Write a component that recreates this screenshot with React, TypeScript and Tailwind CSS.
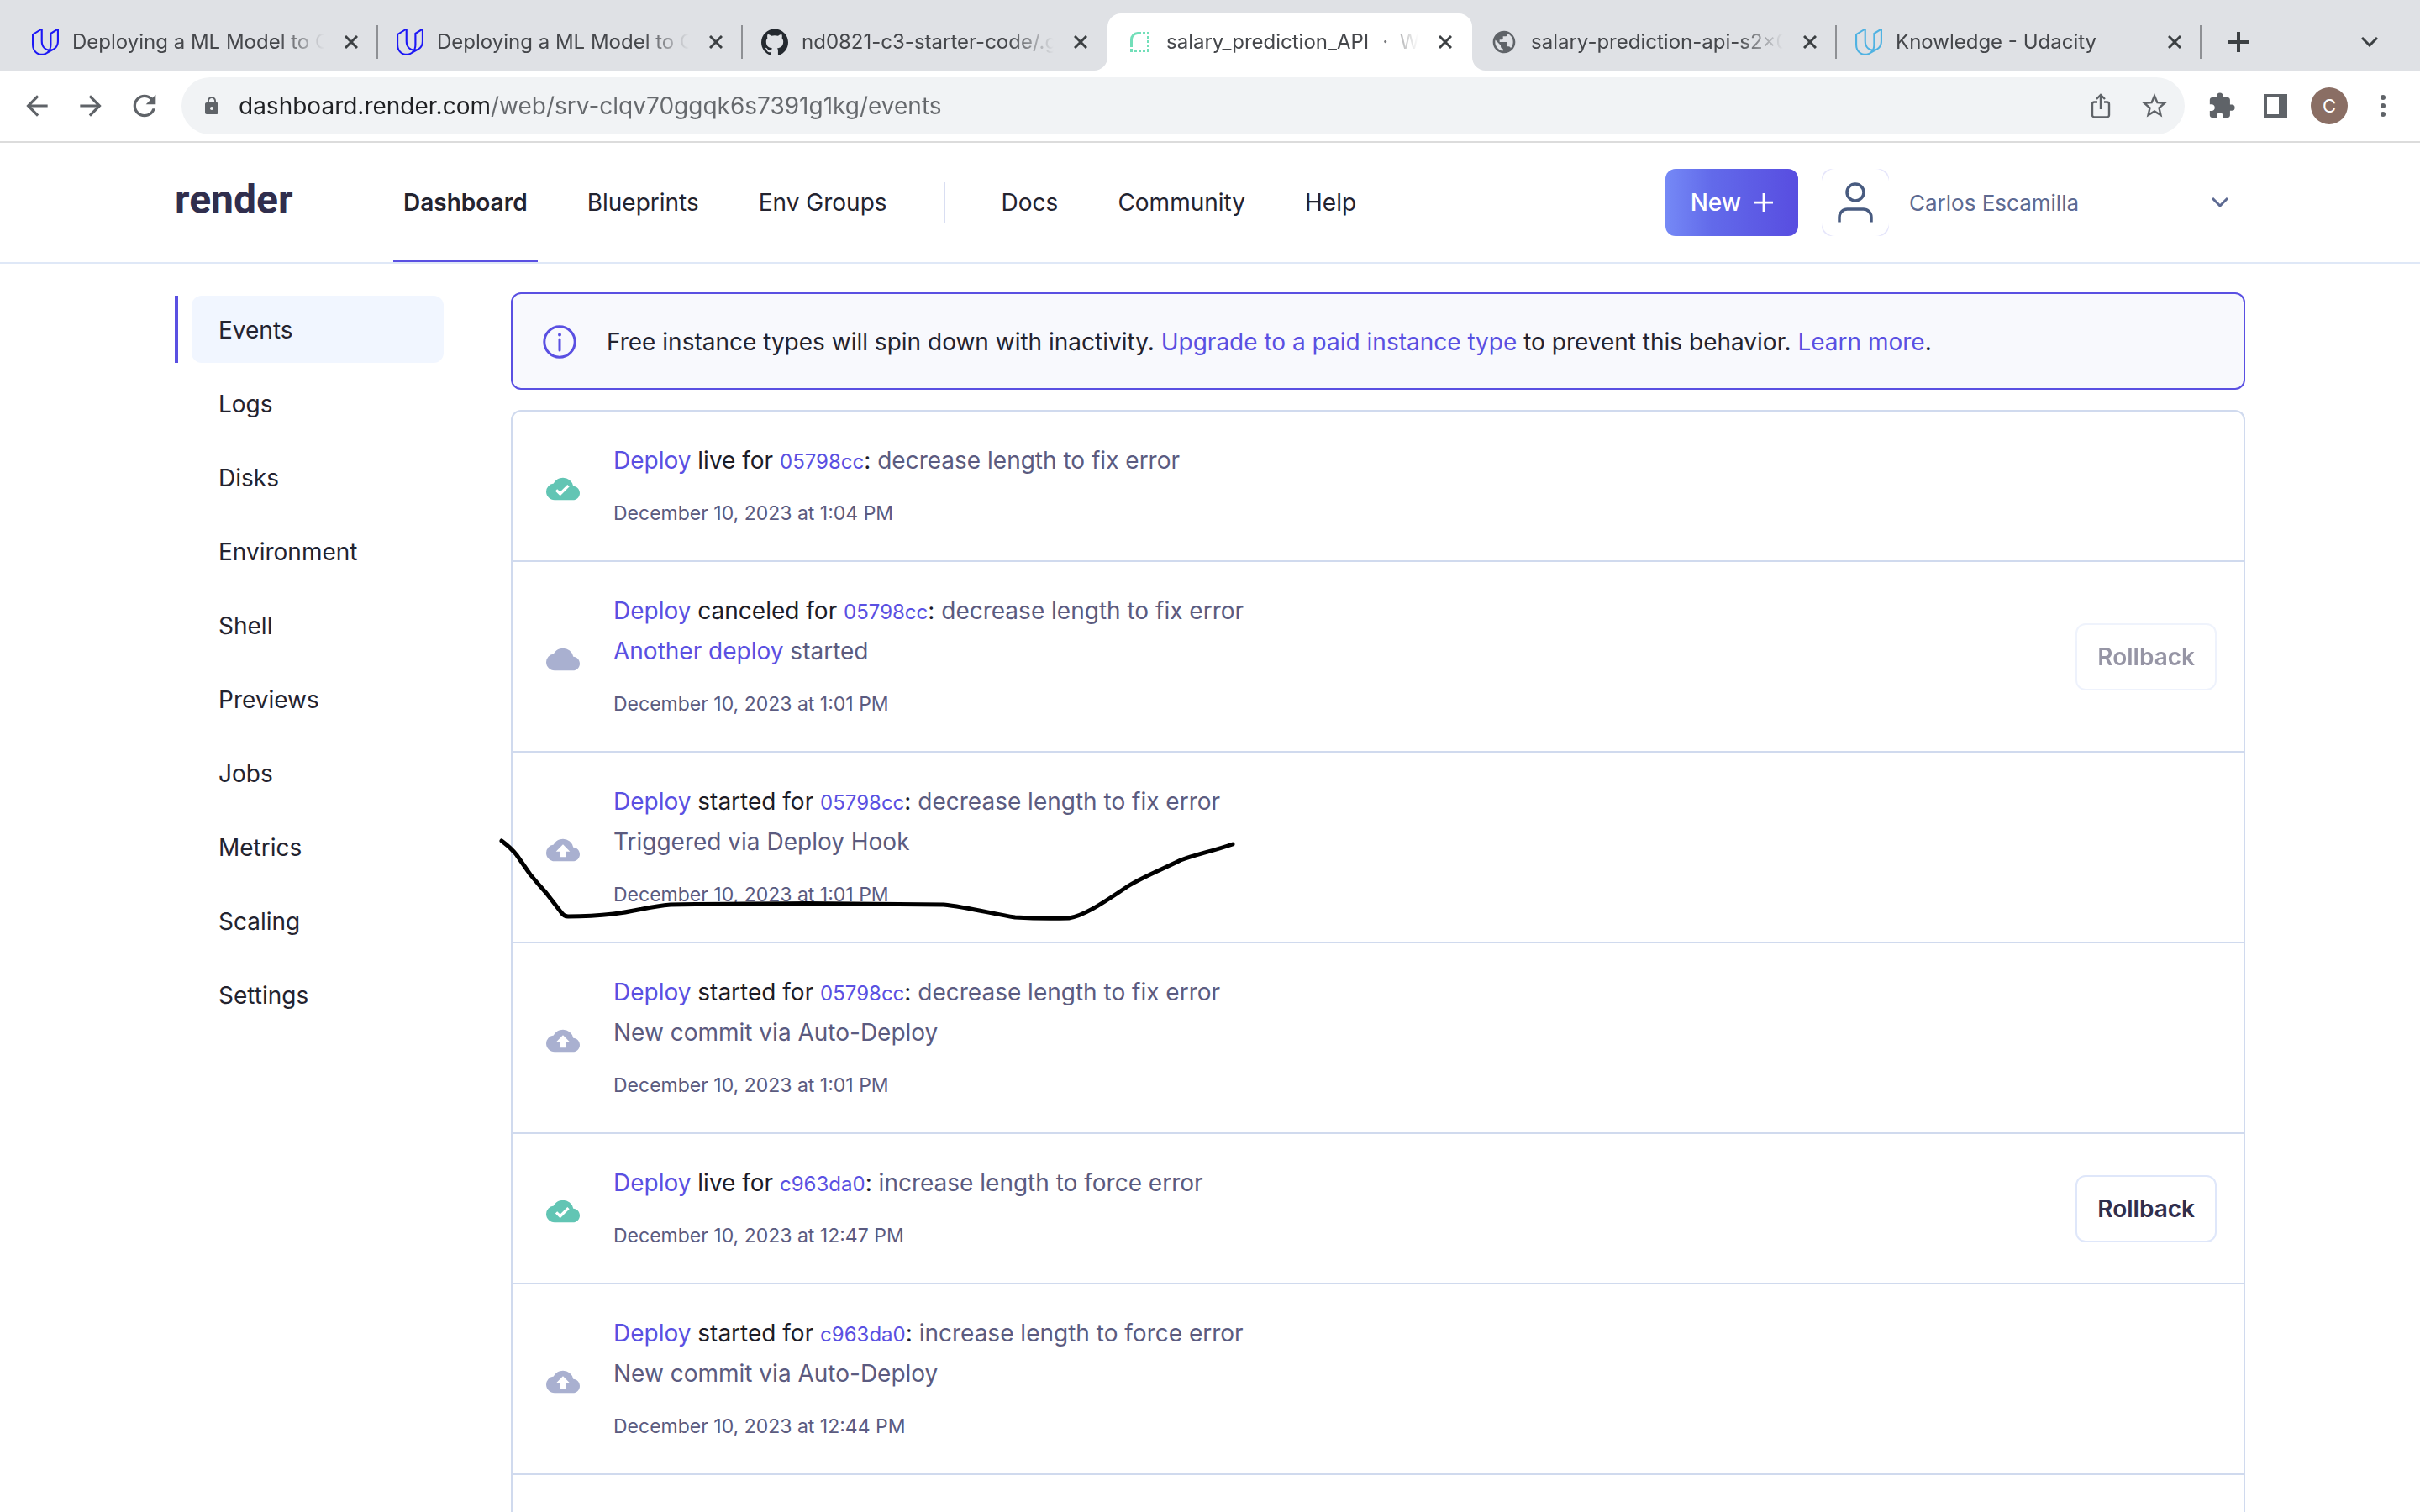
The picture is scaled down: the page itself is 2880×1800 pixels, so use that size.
import React from "react";
import {
  MdArrowBack,
  MdArrowForward,
  MdBackup,
  MdCloud,
  MdCloudDone,
  MdExtension,
  MdLock,
  MdPublic,
  MdRefresh,
  MdStarBorder,
} from "react-icons/md";
import { SiGithub, SiUdacity } from "react-icons/si";

/* ---------- small drawings ---------- */

function CloseIcon() {
  return (
    <svg viewBox="0 0 16 16" className="size-4" fill="none" stroke="#3c4043" strokeWidth="3">
      <path d="M1 1l14 14M15 1L1 15" />
    </svg>
  );
}

function Chevron({ className }: { className: string }) {
  return (
    <svg viewBox="0 0 20 12" className={className} fill="none" stroke="currentColor" strokeWidth="3">
      <path d="M1 1l9 9 9-9" />
    </svg>
  );
}

function Plus({ className }: { className: string }) {
  return (
    <svg viewBox="0 0 24 24" className={className} fill="none" stroke="currentColor">
      <path d="M12 0v24M0 12h24" />
    </svg>
  );
}

function RenderFavicon() {
  return (
    <svg viewBox="0 0 32 32" className="size-8 shrink-0" fill="#72dfb9">
      <path d="M5 22V13a9 9 0 0 1 9-9h4v3h-4a6 6 0 0 0-6 6v9z" />
      <path d="M20 4h3v3h-3zM25 4h3v3h-3zM25 9h3v3h-3zM25 14h3v3h-3zM25 19h3v3h-3zM25 24h3v4h-3zM20 25h3v3h-3zM15 25h3v3h-3zM10 25h3v3h-3zM5 24h3v4H5z" />
    </svg>
  );
}

function ShareIcon() {
  return (
    <svg viewBox="0 0 24 30" className="h-[30px] w-6" fill="none" stroke="#5f6368" strokeWidth="2.4">
      <path d="M8 10.500H4.500a2.500 2.500 0 0 0-2.500 2.500v13a2.500 2.500 0 0 0 2.500 2.500h15a2.500 2.500 0 0 0 2.500-2.500V13a2.500 2.500 0 0 0-2.500-2.500H16" />
      <path d="M12 19V2.500M7 7l5-5 5 5" />
    </svg>
  );
}

function SidePanelIcon() {
  return (
    <svg viewBox="0 0 28 28" className="size-7" fill="#5f6368" fillRule="evenodd">
      <path d="M0 0h28v28H0zM4 4v20h14V4z" />
    </svg>
  );
}

function PersonIcon() {
  return (
    <svg viewBox="0 0 44 48" className="h-12 w-11" fill="none" stroke="#485b80" strokeWidth="3.500">
      <circle cx="22" cy="12" r="10" />
      <path d="M3 47.500V41.500a9.500 9.500 0 0 1 9.500-9.500h19a9.500 9.500 0 0 1 9.500 9.500v6" />
    </svg>
  );
}

function InfoIcon() {
  return (
    <svg viewBox="0 0 40 40" className="size-10 shrink-0" fill="none" stroke="#5a50e2" strokeWidth="3">
      <circle cx="20" cy="20" r="18.200" />
      <path d="M20 17v13" strokeLinecap="round" />
      <circle cx="20" cy="11.500" r="2" fill="#5a50e2" stroke="none" />
    </svg>
  );
}

function PenStroke() {
  return (
    <svg
      viewBox="590 990 890 110"
      className="pointer-events-none absolute top-[94px] -left-5 h-[110px] w-[890px]"
      fill="none"
      stroke="#000"
      strokeWidth="5"
      strokeLinecap="round"
      strokeLinejoin="round"
    >
      <path d="M597 1001Q608 1009 615 1018Q622 1028 631 1041Q640 1052 650 1063L667 1085Q671 1091 676 1091Q704 1091 730 1088C757 1085 772 1079 798 1077Q850 1076 960 1075.500L1123 1077C1152 1080 1182 1088 1208 1092Q1240 1094 1272 1093C1293 1090 1322 1068 1344 1054C1362 1043 1385 1034 1405 1024C1424 1017 1444 1013 1467 1005" />
    </svg>
  );
}

/* ---------- browser chrome ---------- */

type Tab = { title: string; more?: string; icon: React.ReactNode; active?: boolean; divider?: boolean };

const tabs: Tab[] = [
  { title: "Deploying a ML Model to C", icon: <SiUdacity className="size-8 shrink-0 text-[#1d18f5]" />, divider: true },
  { title: "Deploying a ML Model to C", icon: <SiUdacity className="size-8 shrink-0 text-[#1d18f5]" />, divider: true },
  { title: "nd0821-c3-starter-code/.g", icon: <SiGithub className="size-8 shrink-0 text-[#24292f]" /> },
  { title: "salary_prediction_API", more: "· \u00a0W", icon: <RenderFavicon />, active: true },
  { title: "salary-prediction-api-s2x0", icon: <MdPublic className="size-8 shrink-0 text-[#5f6368]" />, divider: true },
  { title: "Knowledge - Udacity", icon: <SiUdacity className="size-8 shrink-0 text-[#4fb2e2]" />, divider: true },
];

function TabFlare({ side }: { side: "left" | "right" }) {
  return (
    <svg
      viewBox="0 0 16 16"
      className={side === "left" ? "absolute bottom-0 -left-4 size-4" : "absolute -right-4 bottom-0 size-4 -scale-x-100"}
      fill="#fff"
    >
      <path d="M16 0v16H0A16 16 0 0 0 16 0z" />
    </svg>
  );
}

function BrowserTab({ tab }: { tab: Tab }) {
  return (
    <div
      className={
        "relative flex min-w-0 max-w-[434px] flex-1 items-center pr-6 pl-[22px] " +
        (tab.active ? "rounded-t-2xl bg-white" : "")
      }
    >
      {tab.active && <TabFlare side="left" />}
      {tab.active && <TabFlare side="right" />}
      {tab.icon}
      <span className="mr-6 ml-4 flex min-w-0 flex-1 gap-4 overflow-hidden text-2xl whitespace-nowrap text-[#45474b] [mask-image:linear-gradient(90deg,#000_82%,transparent)]">
        <span>{tab.title}</span>
        {tab.more && <span>{tab.more}</span>}
      </span>
      <button type="button" aria-label="Close tab">
        <CloseIcon />
      </button>
      {tab.divider && <span className="absolute top-1/2 right-0 h-10 w-0.5 -translate-y-1/2 bg-[#8e9094]" />}
    </div>
  );
}

function IconSlot({ label, children }: { label: string; children: React.ReactNode }) {
  return (
    <button type="button" aria-label={label} className="flex h-16 w-16 shrink-0 items-center justify-center text-[#5f6368]">
      {children}
    </button>
  );
}

function BrowserChrome() {
  return (
    <div className="shrink-0">
      <div className="flex h-[84px] bg-[#dfe1e5] pt-4 pr-[50px] pl-4 text-[#3c4043]">
        {tabs.map((tab, i) => (
          <BrowserTab key={i} tab={tab} />
        ))}
        <button type="button" aria-label="New tab" className="ml-8">
          <Plus className="size-6 stroke-4" />
        </button>
        <button type="button" aria-label="Search tabs" className="ml-auto">
          <Chevron className="h-3 w-5" />
        </button>
      </div>
      <div className="flex items-center border-b-2 border-[#dcdcdc] bg-white px-3 py-2">
        <IconSlot label="Back">
          <MdArrowBack className="size-[38px]" />
        </IconSlot>
        <IconSlot label="Forward">
          <MdArrowForward className="size-[38px]" />
        </IconSlot>
        <IconSlot label="Reload">
          <MdRefresh className="size-10" />
        </IconSlot>
        <div className="mr-3 ml-3 flex h-[68px] min-w-0 flex-1 items-center rounded-full bg-[#f1f3f5] pr-1 pl-6">
          <MdLock className="size-6 shrink-0 text-[#5f6368]" />
          <input
            type="text"
            aria-label="Address"
            defaultValue="dashboard.render.com/web/srv-clqv70ggqk6s7391g1kg/events"
            className="ml-5 min-w-0 flex-1 bg-[linear-gradient(90deg,#202124_298px,#66696d_298px)] bg-clip-text text-[28px] text-transparent outline-none"
          />
          <IconSlot label="Share">
            <ShareIcon />
          </IconSlot>
          <IconSlot label="Bookmark">
            <MdStarBorder className="size-9" />
          </IconSlot>
        </div>
        <IconSlot label="Extensions">
          <MdExtension className="size-[34px]" />
        </IconSlot>
        <IconSlot label="Side panel">
          <SidePanelIcon />
        </IconSlot>
        <IconSlot label="Profile">
          <span className="flex size-11 items-center justify-center rounded-full bg-[#8a6e64] text-[22px] text-white">C</span>
        </IconSlot>
        <IconSlot label="Menu">
          <svg viewBox="0 0 8 28" className="h-7 w-2" fill="#5f6368">
            <circle cx="4" cy="4" r="3" />
            <circle cx="4" cy="14" r="3" />
            <circle cx="4" cy="24" r="3" />
          </svg>
        </IconSlot>
      </div>
    </div>
  );
}

/* ---------- dashboard ---------- */

function NavLink({ children, active }: { children: React.ReactNode; active?: boolean }) {
  return (
    <a
      href="#"
      className={
        "flex items-center border-y-2 border-t-transparent px-3 " +
        (active ? "border-b-[#5a50e2] font-semibold" : "border-b-transparent")
      }
    >
      {children}
    </a>
  );
}

function Header() {
  return (
    <header className="flex h-36 shrink-0 items-center border-b-2 border-[#dfe8f7] px-52 text-[28px] text-[#23232f]">
      <a href="#" className="w-[260px] pb-1.5 font-[Roboto] text-5xl font-bold text-[#302e4d]">
        render
      </a>
      <nav className="flex gap-[47px] self-stretch">
        <NavLink active>Dashboard</NavLink>
        <NavLink>Blueprints</NavLink>
        <NavLink>Env Groups</NavLink>
        <span className="mx-2 h-12 w-0.5 self-center bg-[#d9def2]" />
        <NavLink>Docs</NavLink>
        <NavLink>Community</NavLink>
        <NavLink>Help</NavLink>
      </nav>
      <button
        type="button"
        className="ml-auto flex h-20 items-center gap-4 rounded-xl bg-[linear-gradient(90deg,#7589f6,#626aea_35%,#584de0)] px-[30px] font-medium text-white"
      >
        New
        <Plus className="size-[22px] stroke-3" />
      </button>
      <button type="button" className="ml-7 flex w-[504px] items-center pr-5 text-[26px] text-[#5d6a92]">
        <span className="rounded-xl bg-[#e6e6fb]">
          <span className="flex size-20 items-center justify-center rounded-2xl bg-white">
            <PersonIcon />
          </span>
        </span>
        <span className="ml-6">Carlos Escamilla</span>
        <Chevron className="ml-auto h-3 w-5" />
      </button>
    </header>
  );
}

const sections = ["Events", "Logs", "Disks", "Environment", "Shell", "Previews", "Jobs", "Metrics", "Scaling", "Settings"];

function Sidebar() {
  return (
    <nav className="mt-1 w-80 shrink-0">
      <ul className="flex flex-col gap-2">
        {sections.map((name, i) => (
          <li key={name} className={"border-l-4 pl-4 " + (i === 0 ? "border-[#5a50e2]" : "border-transparent")}>
            <a
              href="#"
              className={"flex h-20 items-center rounded-xl px-8 pt-0.5 " + (i === 0 ? "bg-[#f1f6ff]" : "")}
            >
              {name}
            </a>
          </li>
        ))}
      </ul>
    </nav>
  );
}

function Link({ children }: { children: React.ReactNode }) {
  return (
    <a href="#" className="text-[#5a50e2]">
      {children}
    </a>
  );
}

type Event = {
  kind: "live" | "canceled" | "started";
  hash: string;
  message: string;
  detail?: React.ReactNode;
  date: string;
  rollback?: "on" | "off";
  marked?: boolean;
};

const events: Event[] = [
  { kind: "live", hash: "05798cc", message: "decrease length to fix error", date: "December 10, 2023 at 1:04 PM" },
  {
    kind: "canceled",
    hash: "05798cc",
    message: "decrease length to fix error",
    detail: (
      <>
        <Link>Another deploy</Link> started
      </>
    ),
    date: "December 10, 2023 at 1:01 PM",
    rollback: "off",
  },
  {
    kind: "started",
    hash: "05798cc",
    message: "decrease length to fix error",
    detail: "Triggered via Deploy Hook",
    date: "December 10, 2023 at 1:01 PM",
    marked: true,
  },
  {
    kind: "started",
    hash: "05798cc",
    message: "decrease length to fix error",
    detail: "New commit via Auto-Deploy",
    date: "December 10, 2023 at 1:01 PM",
  },
  {
    kind: "live",
    hash: "c963da0",
    message: "increase length to force error",
    date: "December 10, 2023 at 12:47 PM",
    rollback: "on",
  },
  {
    kind: "started",
    hash: "c963da0",
    message: "increase length to force error",
    detail: "New commit via Auto-Deploy",
    date: "December 10, 2023 at 12:44 PM",
  },
];

function StatusIcon({ kind }: { kind: Event["kind"] }) {
  if (kind === "live") return <MdCloudDone className="size-10 text-[#62c5b4]" />;
  if (kind === "canceled") return <MdCloud className="size-10 text-[#a9b0d0]" />;
  return <MdBackup className="size-10 text-[#a9b0d0]" />;
}

function EventRow({ event }: { event: Event }) {
  return (
    <li className="relative flex items-center gap-10 border-b-2 border-[#d0daee] pr-8 pl-10">
      <span className="mt-1.5">
        <StatusIcon kind={event.kind} />
      </span>
      <div className="flex-1 pt-[34px] pb-9 text-[#5b5b80]">
        <p className="leading-12">
          <Link>Deploy</Link> <span className="text-[#1c1c28]">{event.kind} for</span>{" "}
          <a href="#" className="text-2xl leading-none text-[#5a50e2]">
            {event.hash}
          </a>
          <span className="text-[#1c1c28]">:</span> {event.message}
        </p>
        {event.detail && <p className="leading-12">{event.detail}</p>}
        <p className="mt-[19px] text-[23px] leading-10">{event.date}</p>
      </div>
      {event.rollback && (
        <button
          type="button"
          disabled={event.rollback === "off"}
          className="h-20 rounded-xl border-2 border-[#dfe7fa] px-6 font-semibold text-[#302e4d] disabled:opacity-50"
        >
          Rollback
        </button>
      )}
      {event.marked && <PenStroke />}
    </li>
  );
}

export default function App() {
  return (
    <div className="flex h-screen flex-col overflow-hidden bg-white font-[Inter,sans-serif]">
      <BrowserChrome />
      <Header />
      <div className="flex gap-20 px-52 pt-[34px] text-[28px] text-[#23232f]">
        <Sidebar />
        <main className="min-w-0 flex-1">
          <div className="flex h-[116px] items-center gap-9 rounded-xl border-2 border-[#5a50e2] bg-[#f8f9fd] px-9 pt-0.5">
            <InfoIcon />
            <p>
              Free instance types will spin down with inactivity. <Link>Upgrade to a paid instance type</Link> to prevent
              this behavior. <Link>Learn more</Link>.
            </p>
          </div>
          <ul className="mt-6 rounded-t-xl border-2 border-b-0 border-[#d0daee]">
            {events.map((event, i) => (
              <EventRow key={i} event={event} />
            ))}
            <li className="h-20" />
          </ul>
        </main>
      </div>
    </div>
  );
}
